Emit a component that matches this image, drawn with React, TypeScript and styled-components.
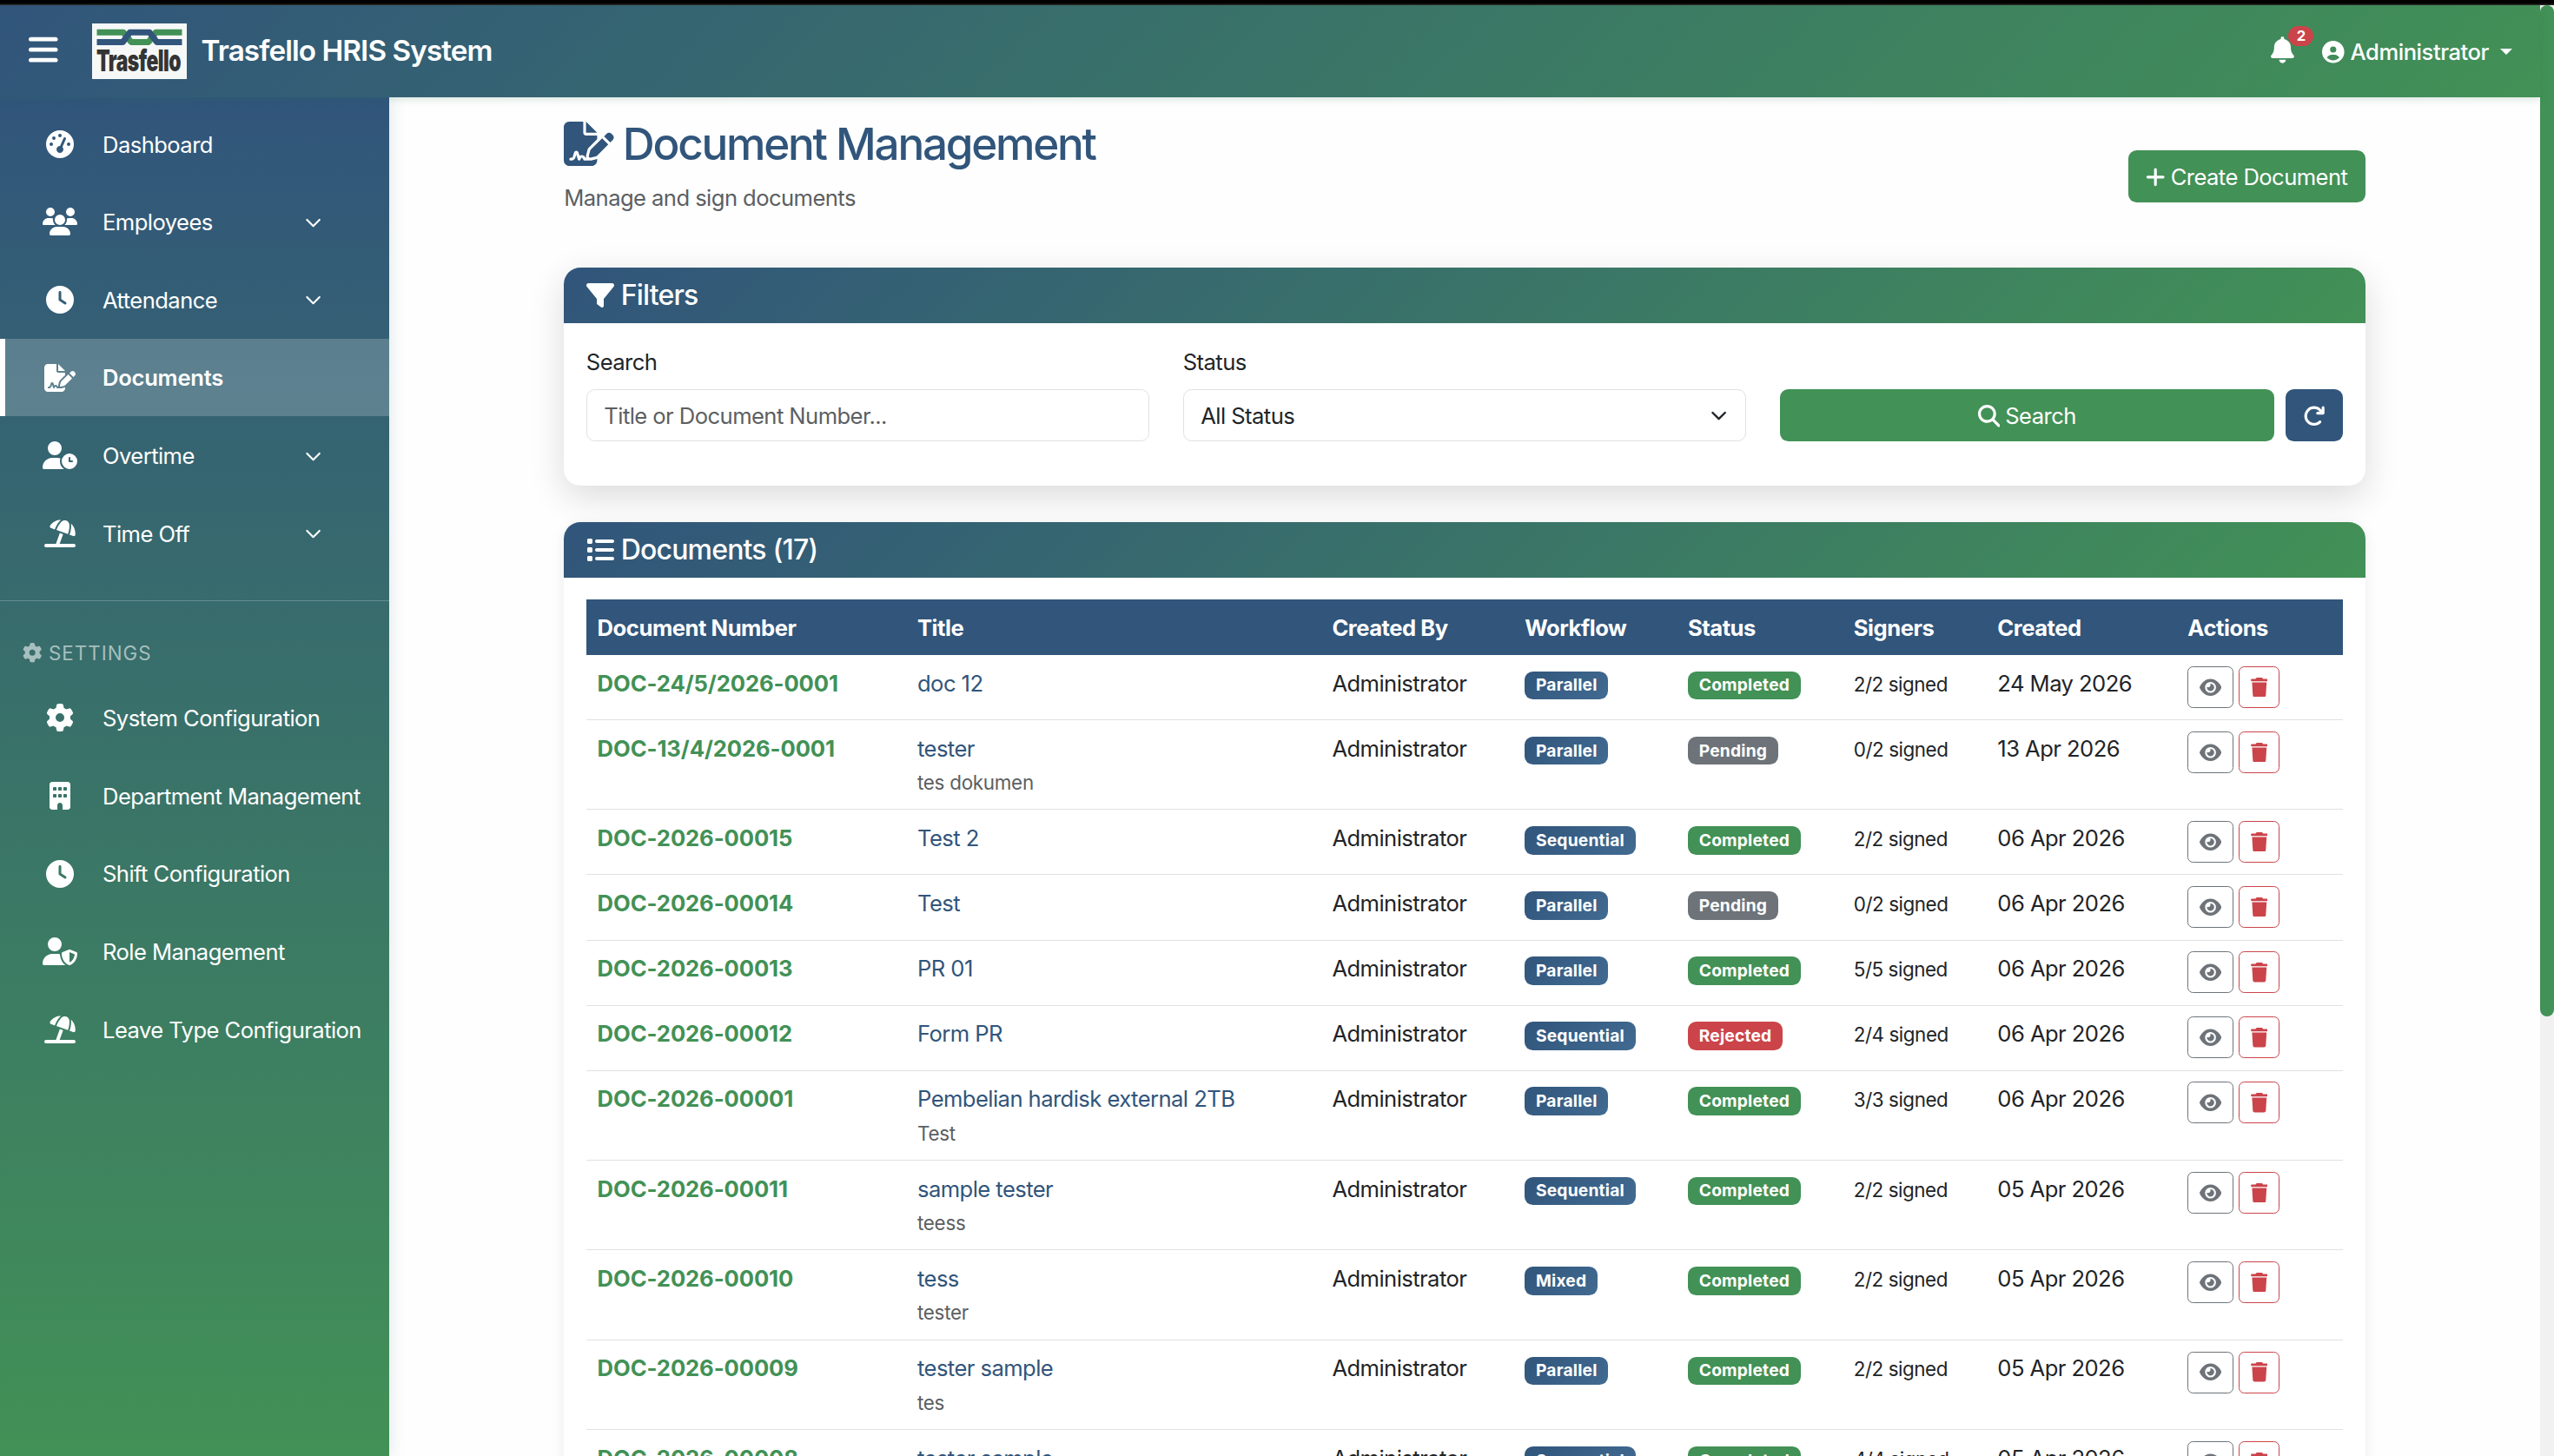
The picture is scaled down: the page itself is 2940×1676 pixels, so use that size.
import React, { FC, ReactNode } from 'react';
import styled, { createGlobalStyle, css } from 'styled-components';
import {
  FaArrowRotateRight,
  FaBars,
  FaBell,
  FaBuilding,
  FaCircleUser,
  FaClock,
  FaEye,
  FaFileSignature,
  FaFilter,
  FaGaugeHigh,
  FaGear,
  FaList,
  FaMagnifyingGlass,
  FaPlus,
  FaTrash,
  FaUmbrellaBeach,
  FaUserClock,
  FaUserShield,
  FaUsers,
} from 'react-icons/fa6';

const colors = {
  blue: '#31557b',
  green: '#429156',
  red: '#cb444a',
  gray: '#6d7378',
  text: '#212427',
  muted: '#5c5f62',
  border: '#dfe1e3',
};

const brandGradient = `linear-gradient(135deg, ${colors.blue} 0%, ${colors.green} 100%)`;

const GlobalStyle = createGlobalStyle`
  html {
    font-size: 25.6px;
  }
  *, *::before, *::after {
    box-sizing: border-box;
  }
  body {
    margin: 0;
    background-color: #fefefe;
    color: ${colors.text};
    font-family: Inter, "Liberation Sans", sans-serif;
    font-size: 1rem;
    line-height: 1.5;
    letter-spacing: -0.022em;
    overflow: hidden;
  }
  h1, h2, p {
    margin: 0;
    font-weight: 500;
  }
  svg {
    flex-shrink: 0;
  }
  /* icons keep their natural proportions instead of a square box */
  svg[viewBox="0 0 640 512"] { width: 1.25em; }
  svg[viewBox="0 0 576 512"] { width: 1.125em; }
  svg[viewBox="0 0 448 512"] { width: 0.875em; }
  svg[viewBox="0 0 384 512"] { width: 0.75em; }
`;

const Page = styled.div`
  display: grid;
  grid-template-columns: 1fr 16px;
  grid-template-rows: 6px 1670px;
  height: 1676px;
  overflow: hidden;
`;

const WindowEdge = styled.div`
  grid-column: 1 / 3;
  background: linear-gradient(#000 60%, #33332f 100%);
`;

const Shell = styled.div`
  display: grid;
  grid-template-columns: 448px 1fr;
  grid-template-rows: 106px 1564px;
`;

const ScrollTrack = styled.div`
  background-color: #f1f1f1;
`;

const ScrollThumb = styled.div`
  height: 1164px;
  border-radius: 8px;
  background-color: ${colors.green};
`;

const Icon = styled.span<{ $size: number }>`
  display: flex;
  flex: none;
  font-size: ${({ $size }) => $size}px;
`;

const Navbar = styled.header`
  grid-column: 1 / 3;
  display: flex;
  align-items: center;
  padding: 0 32px 0 33px;
  background: ${brandGradient};
  box-shadow: 0 3px 8px rgba(40, 110, 80, 0.16);
  color: white;
  z-index: 2;
`;

const MenuToggle = styled(Icon)`
  margin: 0 39px 4px 0;
`;

const Brand = styled.div`
  display: flex;
  align-items: center;
  gap: 17px;
  font-size: 1.3rem;
  font-weight: 600;
  letter-spacing: -0.028em;
`;

const NavRight = styled.div`
  display: flex;
  align-items: center;
  margin-left: auto;
`;

const BellWrap = styled(Icon)`
  position: relative;
  margin: 0 32px 3px 0;
`;

const CountBadge = styled.span`
  position: absolute;
  left: 20px;
  top: -12px;
  width: 29px;
  height: 23px;
  border-radius: 12px;
  background-color: ${colors.red};
  font-size: 16.6px;
  font-weight: 700;
  line-height: 23px;
  text-align: center;
`;

const UserMenu = styled.div`
  display: flex;
  align-items: center;
  gap: 7px;
  padding-top: 2px;
  font-weight: 500;
  letter-spacing: -0.018em;
`;

const Caret = styled.span`
  margin-left: 6px;
  border: 7.4px solid transparent;
  border-top-color: white;
  border-bottom: 0;
`;

const Sidebar = styled.nav`
  padding-top: 9px;
  background: linear-gradient(180deg, ${colors.blue} 0%, ${colors.green} 100%);
  box-shadow: 3px 0 16px rgba(40, 90, 110, 0.12);
  color: white;
  z-index: 1;
`;

const MenuItem = styled.div<{ $active?: boolean }>`
  display: flex;
  align-items: center;
  height: 89.6px;
  border-left: 6px solid transparent;
  ${({ $active }) => $active && css`
    border-left-color: white;
    background-color: rgba(255, 255, 255, 0.2);
    background-clip: padding-box;
    font-weight: 600;
    letter-spacing: -0.01em;
  `}
`;

const MenuIcon = styled.span`
  display: flex;
  flex: none;
  justify-content: center;
  width: 125px;
  margin-right: -13px;
  font-size: 32px;
`;

const MenuLabel = styled.span`
  padding-top: 2px;
  white-space: nowrap;
`;

const MenuChevron = styled.span`
  display: flex;
  margin-left: auto;
  padding: 2px 78px 0 0;
`;

const Divider = styled.div`
  height: 1px;
  margin: 32px 0 41px;
  background-color: rgba(255, 255, 255, 0.24);
`;

const MenuHeading = styled.div`
  display: flex;
  align-items: center;
  gap: 8px;
  height: 38px;
  margin-bottom: 11px;
  padding-left: 25.6px;
  color: rgba(255, 255, 255, 0.56);
  font-size: 0.875rem;
  letter-spacing: 1px;
`;

const Main = styled.main`
  display: flex;
  flex-direction: column;
  width: 2073.6px;
  margin: 0 auto;
`;

const PageHeader = styled.div`
  display: flex;
  flex-shrink: 0;
  justify-content: space-between;
  height: 196px;
  padding-top: 23px;
`;

const Title = styled.h1`
  display: flex;
  align-items: center;
  gap: 10px;
  height: 61px;
  color: ${colors.blue};
  font-size: 2rem;
  line-height: 1.2;
  letter-spacing: -0.044em;
`;

const Subtitle = styled.p`
  margin-top: 12.8px;
  color: ${colors.muted};
  font-weight: 400;
`;

const Button = styled.button<{ $color?: string; $grow?: boolean }>`
  display: flex;
  align-items: center;
  justify-content: center;
  gap: 6px;
  height: 60px;
  padding: 2px 20.5px 0;
  border: 0;
  border-radius: 9.6px;
  background-color: ${({ $color }) => $color || colors.green};
  color: white;
  font: inherit;
  letter-spacing: inherit;
  ${({ $grow }) => $grow && css`flex: 1;`}
`;

const CreateButton = styled(Button)`
  margin-top: 38px;
`;

const Card = styled.section<{ $raised?: boolean }>`
  flex-shrink: 0;
  border-radius: 19.2px;
  background-color: white;
  box-shadow: ${({ $raised }) =>
    $raised ? '0 12.8px 40px rgba(0, 0, 0, 0.14)' : '0 3px 16px rgba(0, 0, 0, 0.08)'};
`;

const DocumentsCard = styled(Card)`
  margin-top: 42px;
`;

const CardHeader = styled.h2`
  display: flex;
  align-items: center;
  gap: 8px;
  height: 64px;
  padding: 0 25.6px;
  border-radius: 19.2px 19.2px 0 0;
  background: ${brandGradient};
  color: white;
  font-size: 1.25rem;
  letter-spacing: -0.026em;
`;

const FilterForm = styled.div`
  display: grid;
  grid-template-columns: repeat(3, 1fr);
  column-gap: 38.4px;
  align-items: end;
  height: 187px;
  padding: 0 25.6px 51px;
`;

const Field = styled.div`
  display: flex;
  flex-direction: column;
  gap: 12px;
`;

const FieldBox = styled.div<{ $placeholder?: boolean }>`
  display: flex;
  align-items: center;
  justify-content: space-between;
  height: 60px;
  padding: 2px 21px 0 19.5px;
  border: 1px solid ${colors.border};
  border-radius: 9.6px;
  color: ${({ $placeholder }) => ($placeholder ? colors.muted : colors.text)};
`;

const ButtonRow = styled.div`
  display: flex;
  gap: 12.8px;
`;

const TableBody = styled.div`
  padding: 25px 25.6px;
`;

const Table = styled.div`
  display: flex;
  flex-direction: column;
`;

const rowGrid = css`
  display: grid;
  grid-template-columns: 368.4px 477.4px 221.8px 187.8px 190.8px 165.6px 219px 1fr;
`;

const HeadRow = styled.div`
  ${rowGrid}
  align-items: center;
  height: 64px;
  padding-top: 2px;
  background-color: ${colors.blue};
  color: white;
  font-weight: 700;
  letter-spacing: -0.018em;
`;

const Row = styled.div<{ $tall?: boolean }>`
  ${rowGrid}
  height: ${({ $tall }) => ($tall ? '103.4px' : '75.05px')};
  padding-top: 13.6px;
  border-bottom: 1px solid ${colors.border};
`;

const Cell = styled.div`
  padding: 0 12.8px;
  white-space: nowrap;
`;

const DocNumber = styled(Cell)`
  color: ${colors.green};
  font-weight: 700;
  letter-spacing: -0.003em;
`;

const DocTitle = styled.div`
  color: ${colors.blue};
`;

const Small = styled.small<{ $muted?: boolean }>`
  display: block;
  padding-top: 1px;
  font-size: 0.875rem;
  line-height: 38.4px;
  letter-spacing: -0.02em;
  ${({ $muted }) => $muted && css`
    color: ${colors.muted};
    letter-spacing: -0.012em;
  `}
`;

const Badge = styled.span<{ $tone: string }>`
  display: inline-block;
  margin-top: 5.2px;
  padding: 6.7px 12.8px;
  border-radius: 9.6px;
  background: ${({ $tone }) => $tone};
  color: white;
  font-size: 0.75rem;
  font-weight: 700;
  line-height: 1;
  letter-spacing: 0.01em;
  vertical-align: top;
`;

const Actions = styled(Cell)`
  display: flex;
  gap: 6.4px;
  margin-top: -0.8px;
`;

const IconButton = styled.button<{ $color: string }>`
  display: flex;
  align-items: center;
  justify-content: center;
  height: 48px;
  padding: 0 12.6px;
  border: 1px solid ${({ $color }) => $color};
  border-radius: 6.4px;
  background-color: transparent;
  color: ${({ $color }) => $color};
  font-size: 22.4px;
`;

const Chevron: FC<{ width?: number }> = ({ width = 2 }) => (
  <svg width="19.2" height="19.2" viewBox="0 0 16 16" fill="none">
    <path d="m2 5 6 6 6-6" stroke="currentColor" strokeWidth={width} strokeLinecap="round" strokeLinejoin="round" />
  </svg>
);

const Logo: FC = () => (
  <svg width="109" height="64" viewBox="0 0 109 64">
    <rect width="109" height="64" fill="#f6f8f8" />
    <g fill="none" strokeWidth="7" strokeLinejoin="round">
      <path d="M5.5 10.2H36L45 21.4H65L73.5 10.2H103.5" stroke={colors.green} />
      <path d="M5.5 21.4H35.5L43.5 10.2H66L74.5 21.4H103.5" stroke={colors.blue} />
    </g>
    <text
      transform="translate(5 55) scale(0.665 1)"
      fill="#343434"
      fontFamily="Inter, sans-serif"
      fontSize="34.4"
      fontWeight="900"
      letterSpacing="-0.8"
    >
      Trasfello
    </text>
  </svg>
);

interface IMenuEntry {
  label: string;
  icon: ReactNode;
  active?: boolean;
  expandable?: boolean;
}

const menu: IMenuEntry[] = [
  { label: 'Dashboard', icon: <FaGaugeHigh /> },
  { label: 'Employees', icon: <FaUsers />, expandable: true },
  { label: 'Attendance', icon: <FaClock />, expandable: true },
  { label: 'Documents', icon: <FaFileSignature />, active: true },
  { label: 'Overtime', icon: <FaUserClock />, expandable: true },
  { label: 'Time Off', icon: <FaUmbrellaBeach />, expandable: true },
];

const settingsMenu: IMenuEntry[] = [
  { label: 'System Configuration', icon: <FaGear /> },
  { label: 'Department Management', icon: <FaBuilding /> },
  { label: 'Shift Configuration', icon: <FaClock /> },
  { label: 'Role Management', icon: <FaUserShield /> },
  { label: 'Leave Type Configuration', icon: <FaUmbrellaBeach /> },
];

type Workflow = 'Parallel' | 'Sequential' | 'Mixed';
type Status = 'Completed' | 'Pending' | 'Rejected';

interface IDocument {
  number: string;
  title: string;
  note?: string;
  workflow: Workflow;
  status: Status;
  signed: string;
  created: string;
}

const workflowTone = `linear-gradient(135deg, ${colors.blue}, #426b92)`;

const statusTone: Record<Status, string> = {
  Completed: colors.green,
  Pending: colors.gray,
  Rejected: colors.red,
};

const documents: IDocument[] = [
  { number: 'DOC-24/5/2026-0001', title: 'doc 12', workflow: 'Parallel', status: 'Completed', signed: '2/2', created: '24 May 2026' },
  { number: 'DOC-13/4/2026-0001', title: 'tester', note: 'tes dokumen', workflow: 'Parallel', status: 'Pending', signed: '0/2', created: '13 Apr 2026' },
  { number: 'DOC-2026-00015', title: 'Test 2', workflow: 'Sequential', status: 'Completed', signed: '2/2', created: '06 Apr 2026' },
  { number: 'DOC-2026-00014', title: 'Test', workflow: 'Parallel', status: 'Pending', signed: '0/2', created: '06 Apr 2026' },
  { number: 'DOC-2026-00013', title: 'PR 01', workflow: 'Parallel', status: 'Completed', signed: '5/5', created: '06 Apr 2026' },
  { number: 'DOC-2026-00012', title: 'Form PR', workflow: 'Sequential', status: 'Rejected', signed: '2/4', created: '06 Apr 2026' },
  { number: 'DOC-2026-00001', title: 'Pembelian hardisk external 2TB', note: 'Test', workflow: 'Parallel', status: 'Completed', signed: '3/3', created: '06 Apr 2026' },
  { number: 'DOC-2026-00011', title: 'sample tester', note: 'teess', workflow: 'Sequential', status: 'Completed', signed: '2/2', created: '05 Apr 2026' },
  { number: 'DOC-2026-00010', title: 'tess', note: 'tester', workflow: 'Mixed', status: 'Completed', signed: '2/2', created: '05 Apr 2026' },
  { number: 'DOC-2026-00009', title: 'tester sample', note: 'tes', workflow: 'Parallel', status: 'Completed', signed: '2/2', created: '05 Apr 2026' },
  { number: 'DOC-2026-00008', title: 'tester sample', workflow: 'Sequential', status: 'Completed', signed: '4/4', created: '05 Apr 2026' },
];

const columns = ['Document Number', 'Title', 'Created By', 'Workflow', 'Status', 'Signers', 'Created', 'Actions'];

const MenuEntry: FC<IMenuEntry> = (props) => (
  <MenuItem $active={props.active}>
    <MenuIcon>{props.icon}</MenuIcon>
    <MenuLabel>{props.label}</MenuLabel>
    {props.expandable && (
      <MenuChevron>
        <Chevron width={1.8} />
      </MenuChevron>
    )}
  </MenuItem>
);

const DocumentRow: FC<{ doc: IDocument }> = ({ doc }) => (
  <Row $tall={!!doc.note}>
    <DocNumber>{doc.number}</DocNumber>
    <Cell>
      <DocTitle>{doc.title}</DocTitle>
      {doc.note && <Small $muted>{doc.note}</Small>}
    </Cell>
    <Cell>Administrator</Cell>
    <Cell>
      <Badge $tone={workflowTone}>{doc.workflow}</Badge>
    </Cell>
    <Cell>
      <Badge $tone={statusTone[doc.status]}>{doc.status}</Badge>
    </Cell>
    <Cell>
      <Small>{doc.signed} signed</Small>
    </Cell>
    <Cell>{doc.created}</Cell>
    <Actions>
      <IconButton $color={colors.gray}>
        <FaEye />
      </IconButton>
      <IconButton $color={colors.red}>
        <FaTrash />
      </IconButton>
    </Actions>
  </Row>
);

const App: FC = () => {
  return (
    <>
      <GlobalStyle />
      <Page>
        <WindowEdge />
        <Shell>
          <Navbar>
            <MenuToggle $size={38.4}>
              <FaBars />
            </MenuToggle>
            <Brand>
              <Logo />
              Trasfello HRIS System
            </Brand>
            <NavRight>
              <BellWrap $size={30.7}>
                <FaBell />
                <CountBadge>2</CountBadge>
              </BellWrap>
              <UserMenu>
                <Icon $size={25.6}>
                  <FaCircleUser />
                </Icon>
                Administrator
                <Caret />
              </UserMenu>
            </NavRight>
          </Navbar>

          <Sidebar>
            {menu.map((entry) => (
              <MenuEntry key={entry.label} {...entry} />
            ))}
            <Divider />
            <MenuHeading>
              <FaGear />
              SETTINGS
            </MenuHeading>
            {settingsMenu.map((entry) => (
              <MenuEntry key={entry.label} {...entry} />
            ))}
          </Sidebar>

          <Main>
            <PageHeader>
              <div>
                <Title>
                  <FaFileSignature />
                  Document Management
                </Title>
                <Subtitle>Manage and sign documents</Subtitle>
              </div>
              <CreateButton>
                <FaPlus />
                Create Document
              </CreateButton>
            </PageHeader>

            <Card $raised>
              <CardHeader>
                <FaFilter />
                Filters
              </CardHeader>
              <FilterForm>
                <Field>
                  <span>Search</span>
                  <FieldBox $placeholder>Title or Document Number...</FieldBox>
                </Field>
                <Field>
                  <span>Status</span>
                  <FieldBox>
                    All Status
                    <Chevron />
                  </FieldBox>
                </Field>
                <ButtonRow>
                  <Button $grow>
                    <FaMagnifyingGlass />
                    Search
                  </Button>
                  <Button $color={colors.blue}>
                    <FaArrowRotateRight />
                  </Button>
                </ButtonRow>
              </FilterForm>
            </Card>

            <DocumentsCard>
              <CardHeader>
                <FaList />
                Documents (17)
              </CardHeader>
              <TableBody>
                <Table>
                  <HeadRow>
                    {columns.map((column) => (
                      <Cell key={column}>{column}</Cell>
                    ))}
                  </HeadRow>
                  {documents.map((doc) => (
                    <DocumentRow key={doc.number} doc={doc} />
                  ))}
                </Table>
              </TableBody>
            </DocumentsCard>
          </Main>
        </Shell>
        <ScrollTrack>
          <ScrollThumb />
        </ScrollTrack>
      </Page>
    </>
  );
};

export default App;
